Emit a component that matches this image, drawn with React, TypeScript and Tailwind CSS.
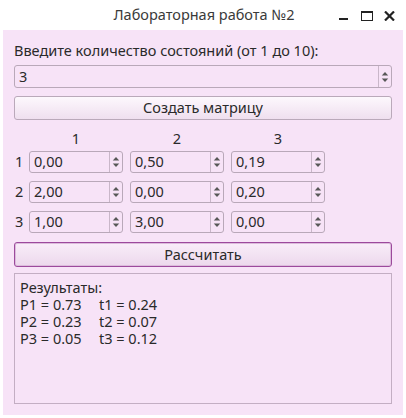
import React from "react";

const BG = "bg-[#f7e3f7]";

function Arrows() {
  return (
    <svg width="13" height="20" viewBox="0 0 13 20" className="block">
      <polygon points="3,8.5 10,8.5 6.5,4.5" fill="#585858" />
      <polygon points="3,11.5 10,11.5 6.5,15.5" fill="#585858" />
    </svg>
  );
}

function Spin({ value, className }: { value: string; className: string }) {
  return (
    <div className={`flex rounded-[3px] border border-[#b9a8b9] ${BG} ${className}`}>
      <div className="flex flex-1 items-center pl-[4px] text-[14.5px] text-[#2a2a2a]">{value}</div>
      <div className="flex w-[13px] items-center justify-center border-l border-[#c9b7c9]">
        <Arrows />
      </div>
    </div>
  );
}

const matrix = [
  ["0,00", "0,50", "0,19"],
  ["2,00", "0,00", "0,20"],
  ["1,00", "3,00", "0,00"],
];

const results = [
  ["P1 = 0.73", "t1 = 0.24"],
  ["P2 = 0.23", "t2 = 0.07"],
  ["P3 = 0.05", "t3 = 0.12"],
];

export default function App() {
  return (
    <div className="flex h-[418px] w-[406px] flex-col bg-white font-['Noto_Sans',sans-serif] text-[#2a2a2a]">
      <div className="relative flex h-[30px] items-center justify-center text-[14.5px] text-[#3a3a3a]">
        <span className="pl-[2px]">Лабораторная работа №2</span>
        <div className="absolute left-[339px] top-[11px] flex items-start">
          <div className="mt-[7px] h-[2px] w-[9px] bg-[#222]" />
          <div className="ml-[13px] h-[10px] w-[12px] border border-t-2 border-[#222]" />
          <svg width="11" height="10" viewBox="0 0 11 10" className="ml-[11px]">
            <path d="M1 0.5 L10 9.5 M10 0.5 L1 9.5" stroke="#222" strokeWidth="2.2" />
          </svg>
        </div>
      </div>
      <div className={`mx-[3px] flex h-[385px] flex-col px-[11px] ${BG}`}>
        <div className="mt-[10px] text-[14.5px] leading-[20px]">Введите количество состояний (от 1 до 10):</div>
        <Spin value="3" className="mt-[5px] h-[23px] w-[378px]" />
        <button className="mt-[8px] flex h-[24px] w-[378px] items-center justify-center rounded-[3px] border border-[#baa9ba] bg-gradient-to-b from-[#fdf8fd] to-[#efdfef] text-[14.5px] text-[#2a2a2a]">
          Создать матрицу
        </button>
        <div className="mt-[8px] flex h-[20px] text-[14.5px] leading-[20px]">
          <div className="w-[15px]" />
          <div className="flex gap-[7px]">
            {["1", "2", "3"].map((h) => (
              <div key={h} className="w-[94px] text-center">{h}</div>
            ))}
          </div>
        </div>
        <div className="mt-[3px] flex flex-col gap-[8px]">
          {matrix.map((row, i) => (
            <div key={i} className="flex h-[22px] items-center">
              <div className="w-[15px] pl-[1px] text-[14.5px]">{i + 1}</div>
              <div className="flex gap-[7px]">
                {row.map((v, j) => (
                  <Spin key={j} value={v} className="h-[22px] w-[94px]" />
                ))}
              </div>
            </div>
          ))}
        </div>
        <button className="mt-[9px] flex h-[25px] w-[378px] items-center justify-center rounded-[3px] border border-[#9c4a9c] bg-gradient-to-b from-[#f9eef9] to-[#ecd8ec] text-[14.5px] text-[#2a2a2a] shadow-[inset_0_0_0_1px_#dcbcdc]">
          Рассчитать
        </button>
        <div className="mt-[6px] h-[131px] w-[378px] border border-[#c3aec3] px-[5px] pt-[5px] text-[14.5px] leading-[17px]">
          <div>Результаты:</div>
          {results.map(([p, t]) => (
            <div key={p} className="flex">
              <span className="w-[79px]">{p}</span>
              <span>{t}</span>
            </div>
          ))}
        </div>
      </div>
    </div>
  );
}
